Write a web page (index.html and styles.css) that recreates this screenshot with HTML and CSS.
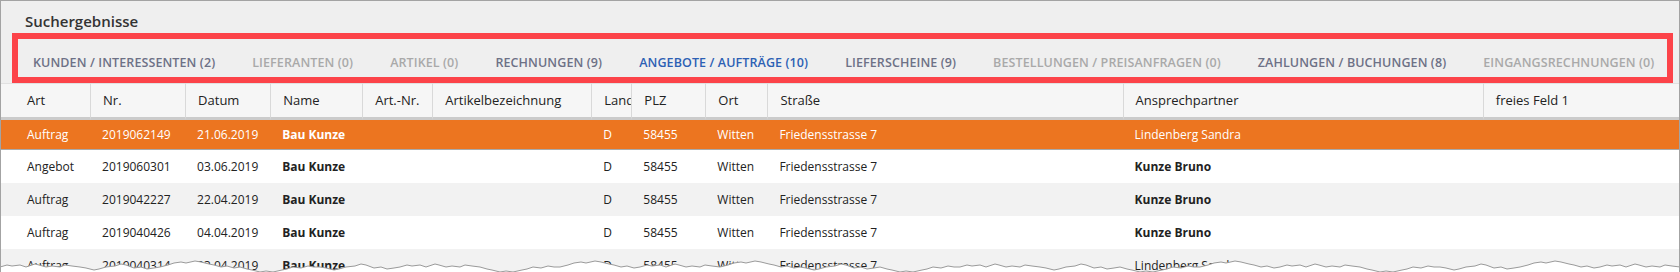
FILE: index.html
```html
<!DOCTYPE html>
<html lang="de">
<head>
    <meta charset="UTF-8">
    <title>Suchergebnisse</title>
    <link rel="stylesheet" href="styles.css">
</head>
<body>

<div class="panel">
    <h2 class="panel-title">Suchergebnisse</h2>

    <div class="tabs">
        <span class="tab">KUNDEN / INTERESSENTEN (2)</span>
        <span class="tab empty">LIEFERANTEN (0)</span>
        <span class="tab empty">ARTIKEL (0)</span>
        <span class="tab">RECHNUNGEN (9)</span>
        <span class="tab active">ANGEBOTE / AUFTRÄGE (10)</span>
        <span class="tab">LIEFERSCHEINE (9)</span>
        <span class="tab empty">BESTELLUNGEN / PREISANFRAGEN (0)</span>
        <span class="tab">ZAHLUNGEN / BUCHUNGEN (8)</span>
        <span class="tab empty">EINGANGSRECHNUNGEN (0)</span>
    </div>

    <table class="results">
        <colgroup>
            <col style="width: 89px">
            <col style="width: 95px">
            <col style="width: 85px">
            <col style="width: 92px">
            <col style="width: 70px">
            <col style="width: 159px">
            <col style="width: 40px">
            <col style="width: 74px">
            <col style="width: 62px">
            <col style="width: 355px">
            <col style="width: 360px">
            <col style="width: 196px">
        </colgroup>
        <thead>
            <tr>
                <th>Art</th>
                <th>Nr.</th>
                <th>Datum</th>
                <th>Name</th>
                <th>Art.-Nr.</th>
                <th>Artikelbezeichnung</th>
                <th>Land</th>
                <th>PLZ</th>
                <th>Ort</th>
                <th>Straße</th>
                <th>Ansprechpartner</th>
                <th>freies Feld 1</th>
            </tr>
        </thead>
        <tbody>
            <tr class="selected">
                <td>Auftrag</td>
                <td>2019062149</td>
                <td>21.06.2019</td>
                <td class="strong">Bau Kunze</td>
                <td></td>
                <td></td>
                <td>D</td>
                <td>58455</td>
                <td>Witten</td>
                <td>Friedensstrasse 7</td>
                <td>Lindenberg Sandra</td>
                <td></td>
            </tr>
            <tr>
                <td>Angebot</td>
                <td>2019060301</td>
                <td>03.06.2019</td>
                <td class="strong">Bau Kunze</td>
                <td></td>
                <td></td>
                <td>D</td>
                <td>58455</td>
                <td>Witten</td>
                <td>Friedensstrasse 7</td>
                <td class="strong">Kunze Bruno</td>
                <td></td>
            </tr>
            <tr>
                <td>Auftrag</td>
                <td>2019042227</td>
                <td>22.04.2019</td>
                <td class="strong">Bau Kunze</td>
                <td></td>
                <td></td>
                <td>D</td>
                <td>58455</td>
                <td>Witten</td>
                <td>Friedensstrasse 7</td>
                <td class="strong">Kunze Bruno</td>
                <td></td>
            </tr>
            <tr>
                <td>Auftrag</td>
                <td>2019040426</td>
                <td>04.04.2019</td>
                <td class="strong">Bau Kunze</td>
                <td></td>
                <td></td>
                <td>D</td>
                <td>58455</td>
                <td>Witten</td>
                <td>Friedensstrasse 7</td>
                <td class="strong">Kunze Bruno</td>
                <td></td>
            </tr>
            <tr>
                <td>Auftrag</td>
                <td>2019040314</td>
                <td>03.04.2019</td>
                <td class="strong">Bau Kunze</td>
                <td></td>
                <td></td>
                <td>D</td>
                <td>58455</td>
                <td>Witten</td>
                <td>Friedensstrasse 7</td>
                <td>Lindenberg Sandra</td>
                <td></td>
            </tr>
        </tbody>
    </table>

    <!-- abgerissene Kante unten -->
    <svg class="torn" width="1680" height="18" viewBox="0 0 1680 18">
        <path d="M-2,13 L0,13
            l7,-2 l5,1 l8,-1 l6,2 l9,-3 l4,1 l7,2 l6,-1 l8,1 l5,-2 l7,1 l8,1
            l6,1 l8,2 l5,-1 l7,-2 l9,-1 l6,-2 l5,1 l8,3 l7,-1 l6,2 l7,-1 l6,-1
            l8,-2 l6,-2 l7,-1 l5,1 l9,-2 l6,1 l8,2 l5,1 l7,2 l6,-1 l7,2 l6,-1
            l7,2 l5,1 l8,2 l6,-1 l7,1 l9,-2 l5,-1 l6,-2 l8,1 l7,-2 l6,1 l6,0
            l6,1 l8,2 l5,-1 l7,-2 l9,-1 l6,-2 l5,1 l8,3 l7,-1 l6,2 l7,-1 l6,-1
            l7,-2 l5,1 l8,-1 l6,2 l9,-3 l4,1 l7,2 l6,-1 l8,1 l5,-2 l7,1 l8,1
            l7,2 l5,1 l8,2 l6,-1 l7,1 l9,-2 l5,-1 l6,-2 l8,1 l7,-2 l6,1 l6,0
            l8,-2 l6,-2 l7,-1 l5,1 l9,-2 l6,1 l8,2 l5,1 l7,2 l6,-1 l7,2 l6,-1
            l7,-2 l5,1 l8,-1 l6,2 l9,-3 l4,1 l7,2 l6,-1 l8,1 l5,-2 l7,1 l8,1
            l8,-2 l6,-2 l7,-1 l5,1 l9,-2 l6,1 l8,2 l5,1 l7,2 l6,-1 l7,2 l6,-1
            l6,1 l8,2 l5,-1 l7,-2 l9,-1 l6,-2 l5,1 l8,3 l7,-1 l6,2 l7,-1 l6,-1
            l7,2 l5,1 l8,2 l6,-1 l7,1 l9,-2 l5,-1 l6,-2 l8,1 l7,-2 l6,1 l6,0
            l7,-2 l5,1 l8,-1 l6,2 l9,-3 l4,1 l7,2 l6,-1 l8,1 l5,-2 l7,1 l8,1
            l6,1 l8,2 l5,-1 l7,-2 l9,-1 l6,-2 l5,1 l8,3 l7,-1 l6,2 l7,-1 l6,-1
            l7,2 l5,1 l8,2 l6,-1 l7,1 l9,-2 l5,-1 l6,-2 l8,1 l7,-2 l6,1 l6,0
            l8,-2 l6,-2 l7,-1 l5,1 l9,-2 l6,1 l8,2 l5,1 l7,2 l6,-1 l7,2 l6,-1
            l7,-2 l5,1 l8,-1 l6,2 l9,-3 l4,1 l7,2 l6,-1 l8,1 l5,-2 l7,1 l8,1
            l7,2 l5,1 l8,2 l6,-1 l7,1 l9,-2 l5,-1 l6,-2 l8,1 l7,-2 l6,1 l6,0
            l6,1 l8,2 l5,-1 l7,-2 l9,-1 l6,-2 l5,1 l8,3 l7,-1 l6,2 l7,-1 l6,-1
            l8,-2 l6,-2 l7,-1 l5,1 l9,-2 l6,1 l8,2 l5,1 l7,2 l6,-1 l7,2 l6,-1
            l7,-2 l5,1 l8,-1 l6,2 l9,-3 l4,1 l7,2 l6,-1 l8,1 l5,-2 l7,1 l8,1
            L1682,13 L1682,30 L-2,30 Z"/>
    </svg>
</div>

</body>
</html>
```

FILE: styles.css
```css
body {
    margin: 0;
    font-family: "Open Sans", "Noto Sans", sans-serif;
    background-color: #fff;
}
.panel {
    position: relative;
    width: 1680px;
    height: 272px;
    box-sizing: border-box;
    border: 1px solid #a3a3a3;
    border-bottom: none;
    background-color: #efefef;
    overflow: hidden;
}
.panel-title {
    margin: 0;
    padding: 10px 0 0 24px;
    font-size: 15px;
    line-height: 20px;
    font-weight: 600;
    color: #333;
}
.tabs {
    display: flex;
    gap: 37px;
    margin: 2px 6px 0 11px;
    padding: 16px 0 6px 15px;
    border: 6px solid #fc4349;
    font-size: 12.5px;
    line-height: 16px;
    font-weight: 600;
    letter-spacing: 0.1px;
    white-space: nowrap;
}
.tab {
    color: #6d7186;
}
.tab.empty {
    color: #a9a9a9;
}
.tab.active {
    color: #2c60b4;
}
.results {
    width: 1678px;
    table-layout: fixed;
    border-collapse: separate;
    border-spacing: 0;
    font-size: 12px;
    color: #222;
}
.results th {
    padding: 0 12px;
    line-height: 33px;
    font-size: 13px;
    font-weight: 400;
    text-align: left;
    color: #222;
    background-color: #f6f6f6;
    border-top: 1px solid #e1e1e1;
    border-bottom: 3px solid #cbcbcb;
    white-space: nowrap;
    overflow: hidden;
}
.results th + th {
    border-left: 1px solid #d9d9d9;
}
.results td {
    padding: 0 12px;
    line-height: 33px;
    white-space: nowrap;
    overflow: hidden;
}
.results th:first-child,
.results td:first-child {
    padding-left: 26px;
}
.results tbody tr {
    background-color: #fff;
}
.results tbody tr:nth-child(odd) {
    background-color: #f2f2f2;
}
.results tbody tr.selected {
    background-color: #ec7520;
    color: #fff;
}
.results tr.selected td {
    line-height: 29px;
    border-bottom: 1px solid #a9a9a9;
}
.results td.strong {
    font-weight: 700;
}
.torn {
    position: absolute;
    left: -1px;
    bottom: 0;
    display: block;
}
.torn path {
    fill: #fff;
    stroke: #9a9a9a;
    stroke-width: 1;
}
```
